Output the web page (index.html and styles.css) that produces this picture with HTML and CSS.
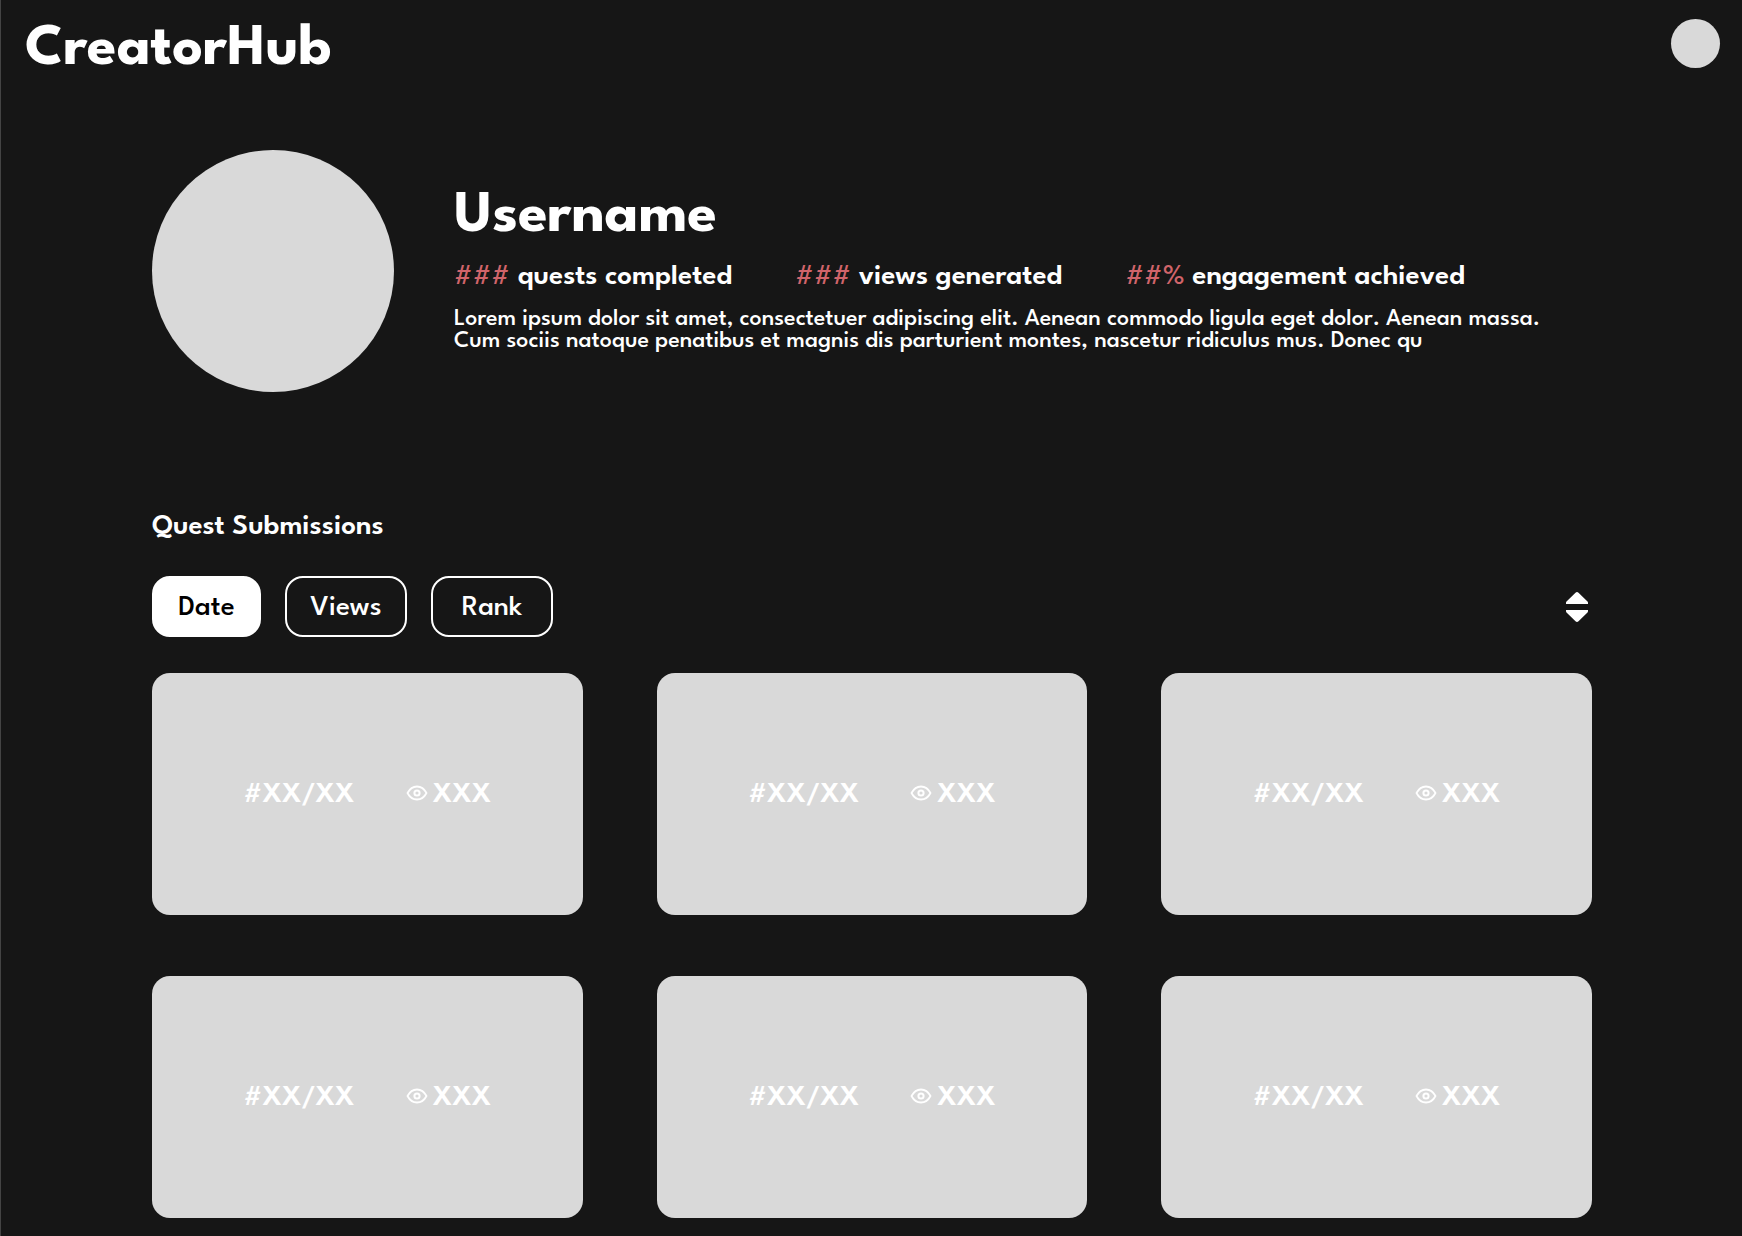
FILE: index.html
```html
<!DOCTYPE html>
<html lang="en">
<head>
<meta charset="utf-8">
<meta name="viewport" content="width=device-width, initial-scale=1">
<title>CreatorHub</title>
<link rel="stylesheet" href="styles.css">
</head>
<body>
<svg class="sprite" aria-hidden="true">
  <symbol id="eye" viewBox="0 0 22 16">
    <path d="M1.500 8C3.600 4 7 1.500 11 1.500s7.400 2.500 9.500 6.500c-2.100 4-5.500 6.500-9.500 6.500S3.600 12 1.500 8z" fill="none" stroke="currentColor" stroke-width="1.800" stroke-linejoin="round"/>
    <circle cx="11" cy="8" r="2.600" fill="none" stroke="currentColor" stroke-width="2"/>
  </symbol>
</svg>
<header class="topbar">
  <a class="logo" href="#">CreatorHub</a>
  <button class="account" type="button" aria-label="Account"></button>
</header>
<main class="page">
  <section class="profile">
    <div class="avatar"></div>
    <div class="about">
      <h1 class="name">Username</h1>
      <ul class="stats">
        <li><span class="figure">###</span> quests completed</li>
        <li><span class="figure">###</span> views generated</li>
        <li><span class="figure">##%</span> engagement achieved</li>
      </ul>
      <p class="bio">Lorem ipsum dolor sit amet, consectetuer adipiscing elit. Aenean commodo ligula eget dolor. Aenean massa. Cum sociis natoque penatibus et magnis dis parturient montes, nascetur ridiculus mus. Donec qu</p>
    </div>
  </section>
  <section class="submissions">
    <h2 class="heading">Quest Submissions</h2>
    <div class="toolbar">
      <button class="chip chip-active" type="button">Date</button>
      <button class="chip" type="button">Views</button>
      <button class="chip" type="button">Rank</button>
      <button class="sort" type="button" aria-label="Sort order">
        <svg width="22" height="30" viewBox="0 0 22 30"><path d="M11 0q.8 0 1.500.7L21.500 9.500q.5.600.5 1.200V12H0v-1.300q0-.6.500-1.200L9.500.7Q10.200 0 11 0zM0 18h22v1.300q0 .6-.5 1.200l-9 8.800q-.7.700-1.500.7t-1.500-.7l-9-8.800Q0 19.900 0 19.300z" fill="currentColor"/></svg>
      </button>
    </div>
    <div class="grid">
      <article class="card"><span>#XX/XX</span><span class="views"><svg class="eye"><use href="#eye"/></svg>XXX</span></article>
      <article class="card"><span>#XX/XX</span><span class="views"><svg class="eye"><use href="#eye"/></svg>XXX</span></article>
      <article class="card"><span>#XX/XX</span><span class="views"><svg class="eye"><use href="#eye"/></svg>XXX</span></article>
      <article class="card"><span>#XX/XX</span><span class="views"><svg class="eye"><use href="#eye"/></svg>XXX</span></article>
      <article class="card"><span>#XX/XX</span><span class="views"><svg class="eye"><use href="#eye"/></svg>XXX</span></article>
      <article class="card"><span>#XX/XX</span><span class="views"><svg class="eye"><use href="#eye"/></svg>XXX</span></article>
    </div>
  </section>
</main>
</body>
</html>
```

FILE: styles.css
```css
* { box-sizing: border-box; }

body {
  margin: 0;
  min-height: 100vh;
  border-left: 1px solid #444;
  background: #161616;
  color: #fff;
  font-family: "League Spartan", Lato, sans-serif;
}

h1, h2, p, ul { margin: 0; padding: 0; }

button {
  padding: 0;
  border: 0;
  background: none;
  color: inherit;
  font: inherit;
}

.sprite { display: none; }

.topbar {
  display: flex;
  align-items: center;
  justify-content: space-between;
  height: 86px;
  padding: 0 22px 0 24px;
}

.logo {
  padding-top: 14px;
  color: inherit;
  font-size: 60px;
  font-weight: 700;
  line-height: 60px;
  text-decoration: none;
}

.account {
  width: 49px;
  height: 49px;
  border-radius: 50%;
  background: #d9d9d9;
}

.page { padding: 64px 150px 18px 151px; }

.profile {
  display: flex;
  align-items: center;
  gap: 60px;
}

.avatar {
  flex: none;
  width: 242px;
  height: 242px;
  border-radius: 50%;
  background: #d9d9d9;
}

.about {
  min-width: 0;
  padding-bottom: 4px;
}

.name {
  font-size: 60px;
  font-weight: 700;
  line-height: 60px;
}

.stats {
  display: flex;
  flex-wrap: wrap;
  gap: 0 63px;
  margin-top: 14px;
  list-style: none;
  font-size: 29px;
  font-weight: 600;
  line-height: 32px;
}

.figure {
  color: #d0646a;
  font-weight: 500;
}

.bio {
  max-width: 1120px;
  margin-top: 15px;
  font-size: 24px;
  font-weight: 500;
  line-height: 22px;
}

.submissions { margin-top: 119px; }

.heading {
  font-size: 29px;
  font-weight: 600;
  line-height: 32px;
}

.toolbar {
  display: flex;
  align-items: center;
  gap: 24px;
  margin-top: 33px;
}

.chip {
  min-width: 122px;
  height: 61px;
  padding-top: 2px;
  border: 2px solid #fff;
  border-radius: 18px;
  font-size: 29px;
  font-weight: 500;
  line-height: 32px;
}

.chip-active {
  min-width: 109px;
  background: #fff;
  color: #000;
}

.sort {
  display: flex;
  margin-left: auto;
  padding: 4px;
}

.grid {
  display: grid;
  grid-template-columns: repeat(3, 1fr);
  gap: 61px 74px;
  margin-top: 36px;
}

.card {
  display: flex;
  align-items: center;
  justify-content: center;
  gap: 51px;
  height: 242px;
  padding-top: 2px;
  border-radius: 18px;
  background: #d9d9d9;
  font-size: 29px;
  font-weight: 600;
  line-height: 32px;
}

.views {
  display: flex;
  align-items: center;
  gap: 5px;
}

.eye {
  width: 22px;
  height: 16px;
  margin-bottom: 4px;
}
```
